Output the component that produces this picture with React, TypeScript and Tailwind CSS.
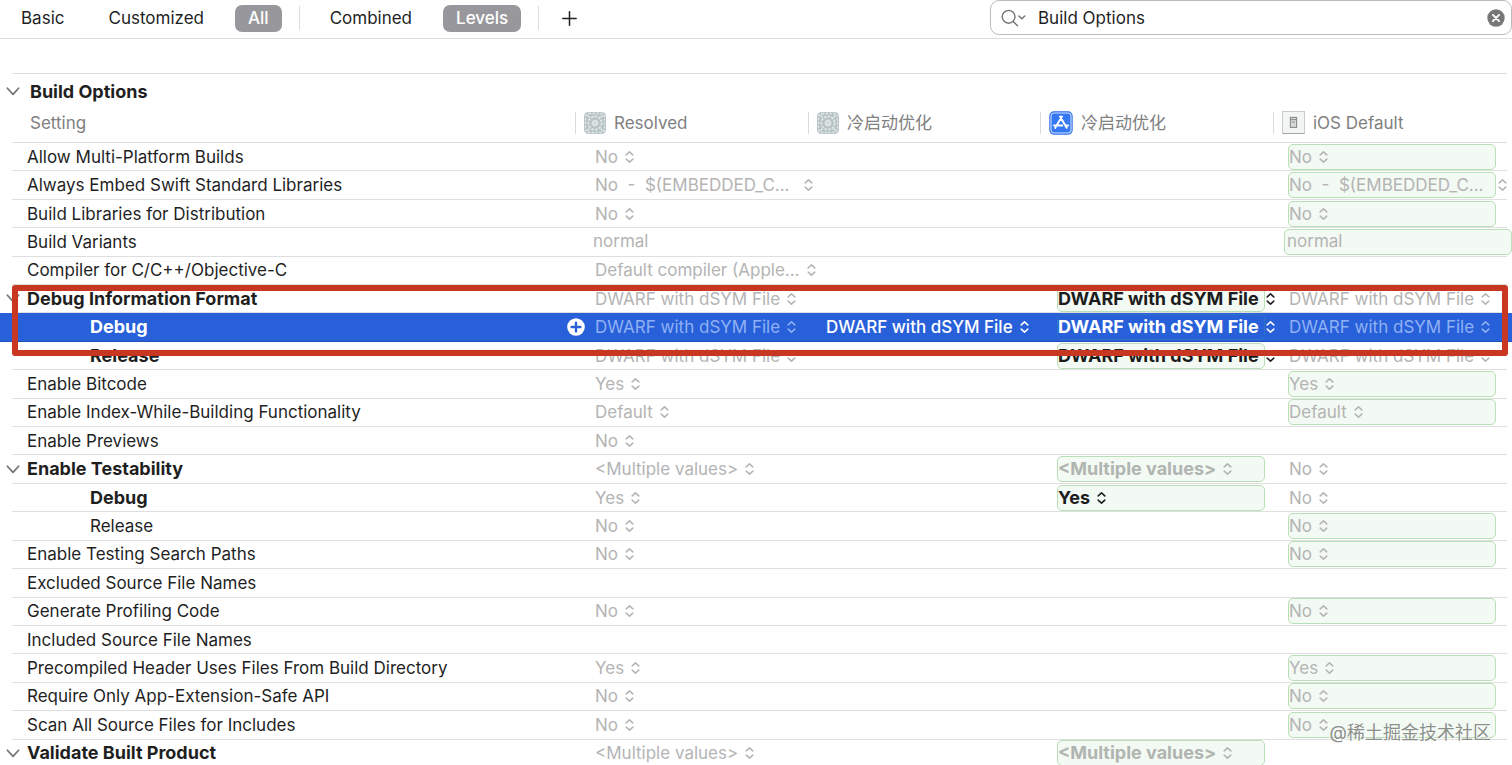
import React, { useState } from "react";
import clsx from "clsx";

type Tone = "muted" | "strong" | "selectedMuted" | "selected" | "selectedStrong" | "mutedBold";

interface Value {
  text: string;
  tone?: Tone;
  boxed?: boolean;
  field?: boolean;
  wideGap?: boolean;
}

interface Setting {
  name: string;
  bold?: boolean;
  child?: boolean;
  expandable?: boolean;
  selected?: boolean;
  /** Resolved, project, target, iOS default */
  values: (Value | null)[];
}

const toneClass: Record<Tone, string> = {
  muted: "text-[#b4b4b4]",
  mutedBold: "text-[#b1b5b1] text-[18px] font-bold",
  strong: "text-[#1c1c1c] text-[18px] font-bold",
  selectedMuted: "text-[#8fb1f4]",
  selected: "text-white font-medium",
  selectedStrong: "text-white text-[18px] font-bold",
};

const cellPadding = ["pl-[19px]", "pl-[17px]", "pl-[17px]", "pl-[15px]"];

const plain = (text: string): Value => ({ text });
const boxed = (text: string): Value => ({ text, boxed: true });
const same = (text: string): (Value | null)[] => [plain(text), null, null, boxed(text)];

const DWARF = "DWARF with dSYM File";
const EMBEDDED = "No\u00a0 -\u00a0 $(EMBEDDED_C...";

const settings: Setting[] = [
  { name: "Allow Multi-Platform Builds", values: same("No") },
  {
    name: "Always Embed Swift Standard Libraries",
    values: [
      { text: EMBEDDED, wideGap: true },
      null,
      null,
      { text: EMBEDDED, wideGap: true, boxed: true },
    ],
  },
  { name: "Build Libraries for Distribution", values: same("No") },
  {
    name: "Build Variants",
    values: [{ text: "normal", field: true }, null, null, { text: "normal", field: true, boxed: true }],
  },
  { name: "Compiler for C/C++/Objective-C", values: [plain("Default compiler (Apple..."), null, null, null] },
  {
    name: "Debug Information Format",
    bold: true,
    expandable: true,
    values: [plain(DWARF), null, { text: DWARF, tone: "strong", boxed: true }, plain(DWARF)],
  },
  {
    name: "Debug",
    bold: true,
    child: true,
    selected: true,
    values: [
      { text: DWARF, tone: "selectedMuted" },
      { text: DWARF, tone: "selected" },
      { text: DWARF, tone: "selectedStrong", boxed: true },
      { text: DWARF, tone: "selectedMuted" },
    ],
  },
  {
    name: "Release",
    bold: true,
    child: true,
    values: [plain(DWARF), null, { text: DWARF, tone: "strong", boxed: true }, plain(DWARF)],
  },
  { name: "Enable Bitcode", values: same("Yes") },
  { name: "Enable Index-While-Building Functionality", values: same("Default") },
  { name: "Enable Previews", values: [plain("No"), null, null, null] },
  {
    name: "Enable Testability",
    bold: true,
    expandable: true,
    values: [
      plain("<Multiple values>"),
      null,
      { text: "<Multiple values>", tone: "mutedBold", boxed: true },
      plain("No"),
    ],
  },
  {
    name: "Debug",
    bold: true,
    child: true,
    values: [plain("Yes"), null, { text: "Yes", tone: "strong", boxed: true }, plain("No")],
  },
  { name: "Release", child: true, values: same("No") },
  { name: "Enable Testing Search Paths", values: same("No") },
  { name: "Excluded Source File Names", values: [null, null, null, null] },
  { name: "Generate Profiling Code", values: same("No") },
  { name: "Included Source File Names", values: [null, null, null, null] },
  { name: "Precompiled Header Uses Files From Build Directory", values: same("Yes") },
  { name: "Require Only App-Extension-Safe API", values: same("No") },
  { name: "Scan All Source Files for Includes", values: same("No") },
  {
    name: "Validate Built Product",
    bold: true,
    expandable: true,
    values: [
      plain("<Multiple values>"),
      null,
      { text: "<Multiple values>", tone: "mutedBold", boxed: true },
      null,
    ],
  },
];

function Chevron() {
  return (
    <svg viewBox="0 0 14 9" className="h-[9px] w-[14px] shrink-0" fill="none" stroke="#757575" strokeWidth="1.7" strokeLinecap="round" strokeLinejoin="round" aria-hidden="true">
      <path d="M1.4 1.2 7 7.4l5.6-6.2" />
    </svg>
  );
}

function UpDown() {
  return (
    <svg viewBox="0 0 9 12" className="pointer-events-none h-3 w-[9px] shrink-0" fill="none" stroke="currentColor" strokeWidth="1.5" strokeLinecap="round" strokeLinejoin="round" aria-hidden="true">
      <path d="M1.2 3.9 4.5.9l3.3 3M1.2 8.1l3.3 3 3.3-3" />
    </svg>
  );
}

function ProjectIcon() {
  return (
    <svg viewBox="0 0 22 22" className="size-[22px] shrink-0" fill="none" aria-hidden="true">
      <rect width="22" height="22" rx="4.5" fill="#b9c4c4" />
      <rect x="1.5" y="1.5" width="19" height="19" rx="3.5" stroke="#e4eaea" strokeWidth="1.3" strokeDasharray="2.2 1.6" />
      <circle cx="11" cy="11" r="6.6" stroke="#e3e9e9" strokeWidth="1.6" strokeDasharray="2.6 1.2" />
      <circle cx="11" cy="11" r="4.4" fill="#c3cdcd" stroke="#b3bfbf" strokeWidth=".7" />
      <circle cx="11" cy="11" r="2.5" fill="#d0d8d8" stroke="#edf1f1" strokeWidth=".9" />
      <path d="m3.4 3.4 2 2m13.2-2-2 2M3.4 18.6l2-2m13.2 2-2-2" stroke="#f1f4f4" strokeWidth="1.1" />
    </svg>
  );
}

function AppIcon() {
  return (
    <svg viewBox="0 0 24 24" className="size-6 shrink-0" fill="none" aria-hidden="true">
      <rect x=".3" y=".3" width="23.4" height="23.4" rx="4.6" fill="#2f6fe8" />
      <rect x="2" y="2" width="20" height="20" rx="3.2" fill="#3478f3" stroke="#cfe0ff" strokeWidth="1.1" />
      <g stroke="#fff" strokeLinecap="round" strokeWidth="2">
        <path d="m13 5.6-5 8.2M11 5.6l6.7 11.2M5 14.4h8.2M16.4 14.4H19M6.7 16.3l-.4.6" />
      </g>
    </svg>
  );
}

function DefaultIcon() {
  return (
    <svg viewBox="0 0 23 23" className="size-[23px] shrink-0" fill="none" aria-hidden="true">
      <rect x=".5" y=".5" width="22" height="22" fill="#f3f5f4" stroke="#c9cccb" />
      <path d="M.5 22.5h22" stroke="#a2a6a4" />
      <rect x="8.4" y="6.4" width="6.2" height="10" fill="#d5dad8" stroke="#858b89" strokeWidth="1.1" />
      <path d="M8.4 8.6h6.2M10 11h3" stroke="#858b89" />
    </svg>
  );
}

const columns = [
  { title: "Resolved", icon: <ProjectIcon /> },
  { title: "冷启动优化", icon: <ProjectIcon /> },
  { title: "冷启动优化", icon: <AppIcon /> },
  { title: "iOS Default", icon: <DefaultIcon /> },
];

function ValueCell({ value, label, selected }: { value: Value; label: string; selected?: boolean }) {
  const box = value.boxed
    ? selected
      ? "border-[#2f74c4]"
      : "border-[#b9dfb6] bg-[#f3f9f3]"
    : "border-transparent";
  const tone = toneClass[value.tone ?? "muted"];

  if (value.field) {
    return (
      <input
        aria-label={label}
        defaultValue={value.text}
        className={clsx("-ml-1 block h-[26px] w-[228px] rounded-[5px] border px-[2px] pb-[2px] outline-none", box, tone)}
      />
    );
  }
  return (
    <div className={clsx("flex h-[26px] w-[208px] items-center whitespace-nowrap rounded-[5px] border", value.wideGap ? "gap-[14px]" : "gap-[7px]", box, tone)}>
      <select aria-label={label} className="field-sizing-content shrink-0 appearance-none bg-transparent outline-none">
        <option>{value.text}</option>
      </select>
      <UpDown />
    </div>
  );
}

function SettingRow({ setting }: { setting: Setting }) {
  const { selected } = setting;
  const line = selected ? "border-b border-[#1f50bd]" : "border-b border-[#dfdfdf]";
  return (
    <tr className={clsx(selected && "relative z-10 bg-[#2860da]")}>
      <td className={clsx("p-0", selected && line)} />
      <th scope="row" className={clsx("p-0 text-left", line, setting.bold ? "text-[18px] font-bold" : "font-normal", selected ? "text-white" : "text-[#1f1f1f]")}>
        <div className={clsx("flex h-[26px] items-center whitespace-nowrap", setting.child && "pl-[63px]")}>
          <span className="flex w-[15px] shrink-0">
            {setting.expandable && (
              <button type="button" aria-label={`Toggle ${setting.name}`} className="-ml-[6px]">
                <Chevron />
              </button>
            )}
          </span>
          {setting.name}
        </div>
      </th>
      {setting.values.map((value, i) => (
        <td key={i} className={clsx("p-0", line, cellPadding[i], selected && i === 0 && "relative")}>
          {selected && i === 0 && (
            <button type="button" aria-label="Add condition" className="absolute -left-2 top-1/2 -translate-y-1/2">
              <svg viewBox="0 0 18 18" className="size-[18px]" aria-hidden="true">
                <circle cx="9" cy="9" r="8.8" fill="#fff" />
                <path d="M9 4.6v8.8M4.6 9h8.8" stroke="#2860da" strokeWidth="2.4" strokeLinecap="round" />
              </svg>
            </button>
          )}
          {value && <ValueCell value={value} label={`${setting.name}, ${columns[i].title}`} selected={selected} />}
        </td>
      ))}
      <td className={clsx("p-0", selected && line)}>
        {selected && (
          <div className="pointer-events-none absolute -bottom-[14px] -top-[28px] left-3 right-1 rounded-[3px] border-[6px] border-[#c83722]" />
        )}
      </td>
    </tr>
  );
}

function FilterButton({ label, active, onClick }: { label: string; active: boolean; onClick: () => void }) {
  return (
    <button
      type="button"
      aria-pressed={active}
      onClick={onClick}
      className={clsx("h-[27px] rounded-[7px] px-[13px]", active ? "bg-[#98989c] font-medium text-white" : "text-[#1f1f1f]")}
    >
      {label}
    </button>
  );
}

export default function App() {
  const [scope, setScope] = useState("All");
  const [view, setView] = useState("Levels");
  const [query, setQuery] = useState("Build Options");

  return (
    <main className="relative flex h-screen flex-col overflow-hidden bg-white font-['Inter','Noto_Sans_CJK_SC',sans-serif] text-[17px] leading-5 text-[#1f1f1f]">
      <header className="flex h-[39px] shrink-0 items-start justify-between border-b border-[#dedede]">
        <div className="flex h-9 items-center gap-[17px] pl-2">
          <div className="flex gap-[18px]">
            {["Basic", "Customized", "All"].map((name) => (
              <FilterButton key={name} label={name} active={scope === name} onClick={() => setScope(name)} />
            ))}
          </div>
          <span className="h-6 w-px bg-[#dcdcdc]" />
          <div className="flex gap-[18px]">
            {["Combined", "Levels"].map((name) => (
              <FilterButton key={name} label={name} active={view === name} onClick={() => setView(name)} />
            ))}
          </div>
          <span className="h-6 w-px bg-[#dcdcdc]" />
          <button type="button" aria-label="Add build setting" className="px-[6px]">
            <svg viewBox="0 0 15 15" className="size-[15px]" stroke="#1f1f1f" strokeWidth="1.5" strokeLinecap="round" aria-hidden="true">
              <path d="M7.5.8v13.4M.8 7.5h13.4" />
            </svg>
          </button>
        </div>
        <label className="flex h-[35px] w-[522px] items-center rounded-[9px] border border-[#bcbcbc] pl-[10px] pr-[6px]">
          <svg viewBox="0 0 26 18" className="h-[18px] w-[26px] shrink-0" fill="none" stroke="#737373" strokeWidth="1.4" strokeLinecap="round" strokeLinejoin="round" aria-hidden="true">
            <circle cx="7.6" cy="7.8" r="6.4" />
            <path d="m12.3 12.5 4.2 4.2M17.8 7l3 2.8 3-2.8" />
          </svg>
          <input
            aria-label="Filter settings"
            value={query}
            onChange={(e) => setQuery(e.target.value)}
            className="ml-[11px] min-w-0 flex-1 bg-transparent outline-none"
          />
          <button type="button" aria-label="Clear filter" onClick={() => setQuery("")}>
            <svg viewBox="0 0 18 18" className="size-[18px]" aria-hidden="true">
              <circle cx="9" cy="9" r="8.7" fill="#777" />
              <path d="m5.9 5.9 6.2 6.2m0-6.2-6.2 6.2" stroke="#fff" strokeWidth="1.9" strokeLinecap="round" />
            </svg>
          </button>
        </label>
      </header>

      <section>
        <h2 className="ml-3 mr-[5px] mt-[34px] flex h-[34px] items-center border-t border-[#dedede] pt-[2px] text-[18px] font-bold">
          <button type="button" aria-label="Toggle Build Options" className="-ml-[6px] mr-[10px]">
            <Chevron />
          </button>
          Build Options
        </h2>
        <table className="h-[calc(100vh-104px)] w-full table-fixed border-separate border-spacing-0">
          <colgroup>
            <col className="w-3" />
            <col />
            <col className="w-[233px]" />
            <col className="w-[232px]" />
            <col className="w-[233px]" />
            <col className="w-[234px]" />
            <col className="w-[5px]" />
          </colgroup>
          <thead>
            <tr className="h-9 text-[#808080]">
              <td className="p-0" />
              <th scope="col" className="border-b border-[#dedede] p-0 pb-1 pl-[18px] text-left font-normal">
                Setting
              </th>
              {columns.map((column, i) => (
                <th key={i} scope="col" className="border-b border-[#dedede] p-0 pb-1 text-left font-normal">
                  <div className="flex h-[22px] items-center gap-2 border-l border-[#dcdcdc] pl-2">
                    {column.icon}
                    <span className="whitespace-nowrap">{column.title}</span>
                  </div>
                </th>
              ))}
              <td className="p-0" />
            </tr>
          </thead>
          <tbody>
            {settings.map((setting, i) => (
              <SettingRow key={i} setting={setting} />
            ))}
          </tbody>
        </table>
      </section>

      <p className="pointer-events-none absolute bottom-5 right-[21px] z-20 text-[18px] leading-6 text-[#8a8f8a] [text-shadow:1px_1px_0_#fff]">
        @稀土掘金技术社区
      </p>
    </main>
  );
}
